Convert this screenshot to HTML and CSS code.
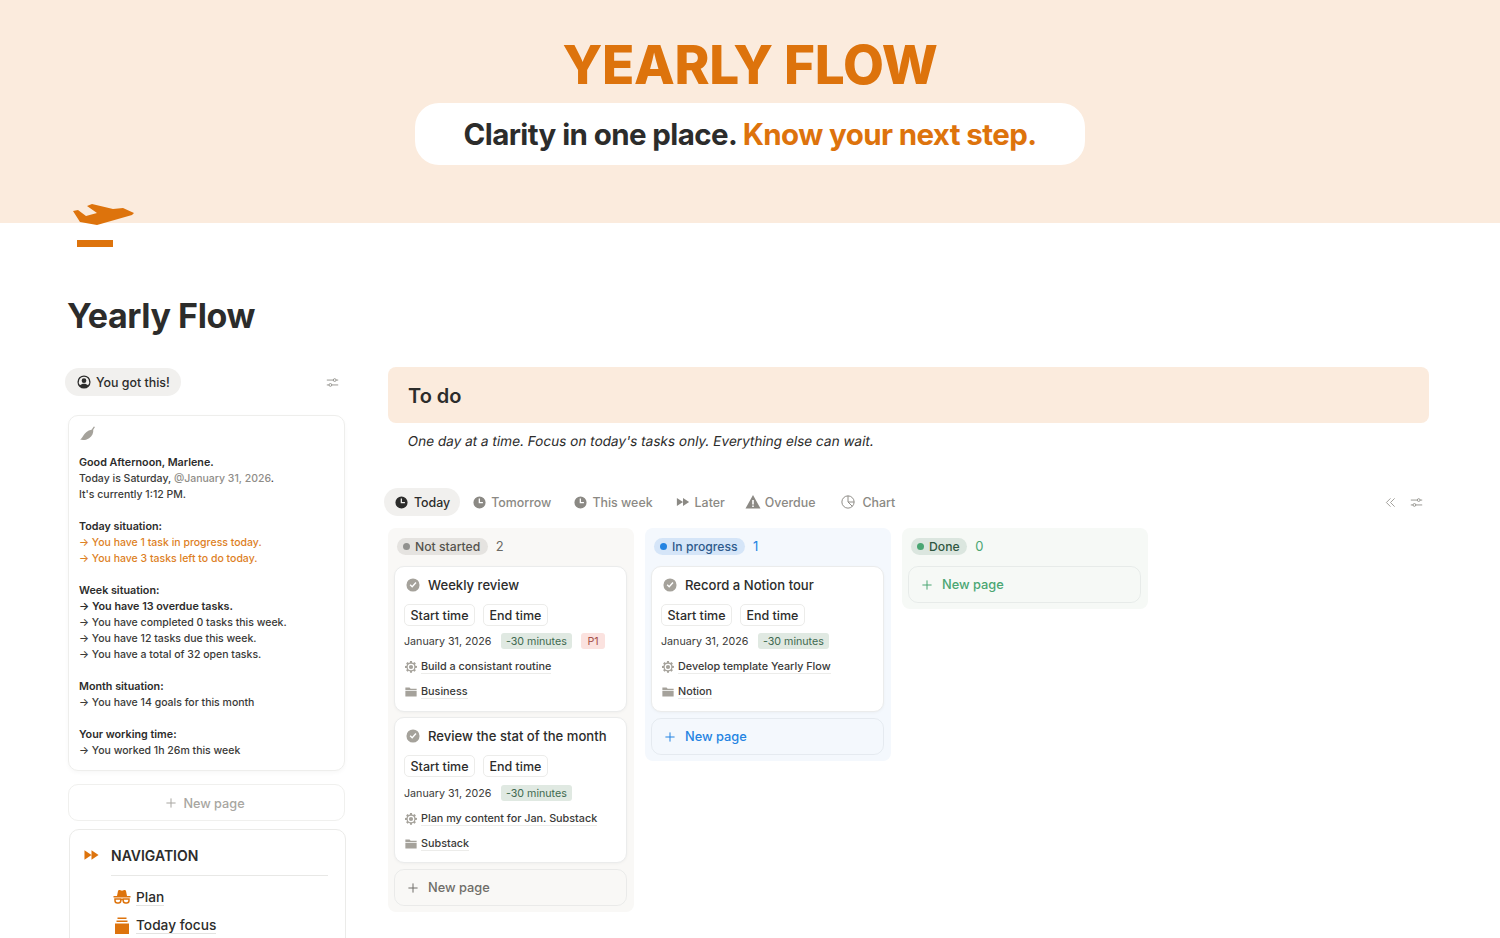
FILE: index.html
```html
<!DOCTYPE html>
<html lang="en-US">
   <head>
      <meta charset="UTF-8"/>
      <title>Yearly Flow</title>
      <link rel="stylesheet" href="styles.css">
   </head>
   <body>
      <svg class="defs" width="0" height="0">
         <defs>
            <symbol id="clock" viewBox="0 0 16 16"><path fill-rule="evenodd" d="M8 .5a7.500 7.500 0 1 1 0 15 7.500 7.500 0 0 1 0-15zM7 3.200v5.800h5.200V7.400H8.600V3.200z"/></symbol>
            <symbol id="check" viewBox="0 0 16 16"><path fill-rule="evenodd" d="M8 .5a7.500 7.500 0 1 1 0 15 7.500 7.500 0 0 1 0-15zM4.200 8.200l2.900 2.900 4.900-5.400-1.200-1.100-3.800 4.200-1.700-1.700z"/></symbol>
            <symbol id="gear" viewBox="0 0 16 16"><path fill-rule="evenodd" d="M6.700 0h2.600l.3 2 1.300.5L12.600 1.300l1.900 1.900-1.200 1.700.6 1.300 2.100.3v2.600l-2.100.3-.6 1.300 1.200 1.700-1.900 1.900-1.700-1.200-1.300.6-.3 2.100H6.700l-.3-2.100-1.300-.6-1.700 1.200-1.900-1.900 1.200-1.700-.6-1.300L0 9.300V6.700l2.100-.3.6-1.300L1.500 3.200l1.900-1.900 1.700 1.200 1.300-.5zM8 3.600a4.400 4.400 0 1 0 0 8.800 4.400 4.400 0 0 0 0-8.800zm0 1.600a2.800 2.800 0 1 1 0 5.600 2.800 2.800 0 0 1 0-5.600z"/></symbol>
            <symbol id="folder" viewBox="0 0 16 16"><path d="M.5 2h5.600l1.400 1.800h8V5.200H.5zM.5 6.200h15V14H.5z"/></symbol>
            <symbol id="sliders" viewBox="0 0 16 16"><path fill="none" stroke="currentColor" stroke-width="1.100" d="M1 5h8M12.400 5H15M1 11h2.800M7 11h8"/><circle cx="10.700" cy="5" r="1.700" fill="none" stroke="currentColor" stroke-width="1.100"/><circle cx="5.400" cy="11" r="1.700" fill="none" stroke="currentColor" stroke-width="1.100"/></symbol>
            <symbol id="plus" viewBox="0 0 12 12"><path fill="none" stroke="currentColor" stroke-width="1.200" d="M6 .5v11M.5 6h11"/></symbol>
         </defs>
      </svg>

      <header class="cover">
         <div class="coverTitle">YEARLY FLOW</div>
         <div class="coverPill">Clarity in one place. <span class="orange">Know your next step.</span></div>
      </header>

      <div class="page">
         <svg class="pageIcon" width="64" height="46" viewBox="72 203 64 46">
            <path fill="#dd730c" d="M73 211l5-1 8 6 11-3-10-7 5-2 21 5 10-1 11 5-2 2-35 10-17-3z"/>
            <rect x="77" y="240" width="36" height="7" fill="#dd730c"/>
         </svg>

         <h1>Yearly Flow</h1>

         <div class="columns">
            <aside class="sidebar">
               <div class="viewRow">
                  <span class="viewPill">
                     <svg class="icon14" viewBox="0 0 16 16"><path fill-rule="evenodd" d="M8 .5a7.500 7.500 0 1 1 0 15 7.500 7.500 0 0 1 0-15zm0 1.500a6 6 0 0 0-4.600 9.800C4.400 10.600 6.100 10 8 10s3.600.6 4.600 1.800A6 6 0 0 0 8 2zM8 3.800a2.700 2.700 0 1 1 0 5.400 2.700 2.700 0 0 1 0-5.400z"/></svg>
                     You got this!
                  </span>
                  <svg class="sliders"><use href="#sliders"/></svg>
               </div>

               <div class="infoCard">
                  <svg class="pepper" viewBox="0 0 16 16"><path fill="#a5a29b" d="M15 1l-1.600 2.600c.4 3-1 6-3.900 7.900-2.800 1.800-6 2.200-8.500 1.300 1.200-.6 2-2 3-3.600C5.600 6.500 8 4 11.800 3.500L14 .5z"/></svg>
                  <p><b>Good Afternoon, Marlene.</b><br>Today is Saturday, <span class="mention">@January 31, 2026</span>.<br>It's currently 1:12 PM.</p>
                  <p><b>Today situation:</b><br><span class="orangeText">→ You have 1 task in progress today.<br>→ You have 3 tasks left to do today.</span></p>
                  <p><b>Week situation:</b><br><b>→ You have 13 overdue tasks.</b><br>→ You have completed 0 tasks this week.<br>→ You have 12 tasks due this week.<br>→ You have a total of 32 open tasks.</p>
                  <p><b>Month situation:</b><br>→ You have 14 goals for this month</p>
                  <p><b>Your working time:</b><br>→ You worked 1h 26m this week</p>
               </div>

               <div class="sideNew"><svg class="plus10"><use href="#plus"/></svg>New page</div>

               <nav class="navCard">
                  <div class="navHead">
                     <svg class="navArrows" viewBox="0 0 16 12"><path fill="#dd730c" d="M.5 1l7.500 5-7.500 5zM8 1l7.500 5L8 11z"/></svg>
                     <span>NAVIGATION</span>
                  </div>
                  <div class="navList">
                     <a class="navItem">
                        <svg class="navIcon" viewBox="0 0 18 18"><path fill="#dd730c" d="M4 8l1-5c.2-.9.9-1.300 1.700-1L9 2.800 11.300 2c.8-.3 1.500.1 1.700 1l1 5h3.500v1.400H.5V8z"/><path fill="none" stroke="#dd730c" stroke-width="1.500" d="M2 11h5.800v1.500c0 1.300-1 2.500-2.400 2.500H4.400C3 15 2 13.800 2 12.500zM10.200 11H16v1.500c0 1.300-1 2.500-2.400 2.500h-1C11.200 15 10.200 13.800 10.200 12.500zM7.800 11.500h2.400"/></svg>
                        <span>Plan</span>
                     </a>
                     <a class="navItem">
                        <svg class="navIcon" viewBox="0 0 18 18"><path fill="#dd730c" d="M4.500 .5h9V2h-9zM3.500 3.500h11V5h-11zM2 6.500h14V17H2z"/></svg>
                        <span>Today focus</span>
                     </a>
                  </div>
               </nav>
            </aside>

            <main class="content">
               <div class="callout">To do</div>
               <p class="quote">One day at a time. Focus on today's tasks only. Everything else can wait.</p>

               <div class="tabs">
                  <span class="tab tabActive"><svg class="icon13"><use href="#clock"/></svg>Today</span>
                  <span class="tab"><svg class="icon13"><use href="#clock"/></svg>Tomorrow</span>
                  <span class="tab"><svg class="icon13"><use href="#clock"/></svg>This week</span>
                  <span class="tab"><svg class="icon14" viewBox="0 0 16 12"><path d="M1 1.500l7 4.500-7 4.500zM8 1.500l7 4.500-7 4.500z"/></svg>Later</span>
                  <span class="tab tabTight"><svg class="icon16" viewBox="0 0 16 16"><path fill-rule="evenodd" d="M8 1l7.500 13.500H.5zM7.200 6v4.500h1.600V6zm0 5.500V13h1.600v-1.500z"/></svg>Overdue</span>
                  <span class="tab tabWide"><svg class="icon14" viewBox="0 0 16 16"><g fill="none" stroke="currentColor" stroke-width="1.100"><circle cx="8" cy="8" r="7"/><path d="M8 1V8l5 5M8 8h7"/></g></svg>Chart</span>
                  <span class="tabTools">
                     <svg class="chevrons" viewBox="0 0 12 12"><path fill="none" stroke="currentColor" d="M6 1.500L1.500 6 6 10.500M10.500 1.500L6 6l4.500 4.500"/></svg>
                     <svg class="sliders"><use href="#sliders"/></svg>
                  </span>
               </div>

               <div class="board">
                  <section class="lane laneGrey">
                     <div class="laneHead"><span class="status"><i class="dot"></i>Not started</span><span class="count">2</span></div>

                     <article class="taskCard">
                        <div class="taskTitle"><svg class="icon14"><use href="#check"/></svg>Weekly review</div>
                        <div class="times"><span>Start time</span><span>End time</span></div>
                        <div class="meta">January 31, 2026 <span class="tag tagGreen">-30 minutes</span> <span class="tag tagRed">P1</span></div>
                        <div class="rel"><svg class="icon12"><use href="#gear"/></svg><span>Build a consistant routine</span></div>
                        <div class="rel"><svg class="icon12"><use href="#folder"/></svg><span>Business</span></div>
                     </article>

                     <article class="taskCard">
                        <div class="taskTitle"><svg class="icon14"><use href="#check"/></svg>Review the stat of the month</div>
                        <div class="times"><span>Start time</span><span>End time</span></div>
                        <div class="meta">January 31, 2026 <span class="tag tagGreen">-30 minutes</span></div>
                        <div class="rel"><svg class="icon12"><use href="#gear"/></svg><span>Plan my content for Jan. Substack</span></div>
                        <div class="rel"><svg class="icon12"><use href="#folder"/></svg><span>Substack</span></div>
                     </article>

                     <div class="newPage"><svg class="plus12"><use href="#plus"/></svg>New page</div>
                  </section>

                  <section class="lane laneBlue">
                     <div class="laneHead"><span class="status"><i class="dot"></i>In progress</span><span class="count">1</span></div>

                     <article class="taskCard">
                        <div class="taskTitle"><svg class="icon14"><use href="#check"/></svg>Record a Notion tour</div>
                        <div class="times"><span>Start time</span><span>End time</span></div>
                        <div class="meta">January 31, 2026 <span class="tag tagGreen">-30 minutes</span></div>
                        <div class="rel"><svg class="icon12"><use href="#gear"/></svg><span>Develop template Yearly Flow</span></div>
                        <div class="rel"><svg class="icon12"><use href="#folder"/></svg><span>Notion</span></div>
                     </article>

                     <div class="newPage"><svg class="plus12"><use href="#plus"/></svg>New page</div>
                  </section>

                  <section class="lane laneGreen">
                     <div class="laneHead"><span class="status"><i class="dot"></i>Done</span><span class="count">0</span></div>
                     <div class="newPage"><svg class="plus12"><use href="#plus"/></svg>New page</div>
                  </section>
               </div>
            </main>
         </div>
      </div>
   </body>
</html>
```

FILE: styles.css
```css
html, body {
   margin: 0;
   padding: 0;
   height: 100vh;
   overflow: hidden;
}

body {
   background: #ffffff;
   color: #2c2c2b;
   font-family: Inter, "Liberation Sans", sans-serif;
}

svg {
   fill: currentColor;
   flex: none;
}

.defs {
   position: absolute;
}

.orange {
   color: #dd730c;
}

/* cover */
.cover {
   height: 223px;
   background: #fbebdd;
   display: flex;
   flex-direction: column;
   align-items: center;
   box-sizing: border-box;
   padding-top: 34px;
}

.coverTitle {
   color: #dd730c;
   font-size: 53px;
   font-weight: 800;
   line-height: 62px;
   letter-spacing: -0.3px;
}

.coverPill {
   margin-top: 7px;
   width: 670px;
   height: 62px;
   background: #ffffff;
   border-radius: 24px;
   font-size: 29.500px;
   font-weight: 700;
   letter-spacing: -0.6px;
   display: flex;
   align-items: center;
   justify-content: center;
   white-space: pre;
}

/* page */
.page {
   padding: 0 71px 0 68px;
}

.pageIcon {
   display: block;
   margin: -20px 0 0 4px;
}

h1 {
   margin: 46px 0 0 -1px;
   font-size: 34px;
   line-height: 42px;
   font-weight: 700;
   letter-spacing: -0.4px;
}

.columns {
   display: flex;
   gap: 43px;
   margin-top: 30px;
}

/* sidebar */
.sidebar {
   width: 277px;
   flex: none;
}

.viewRow {
   display: flex;
   justify-content: space-between;
   align-items: center;
   height: 30px;
   margin-left: -3px;
   padding-right: 6px;
}

.viewPill {
   display: flex;
   align-items: center;
   gap: 5px;
   height: 28px;
   padding: 0 11px 0 12px;
   border-radius: 14px;
   background: #f1f0ee;
   font-size: 12.400px;
   font-weight: 500;
}

.icon13 {
   width: 13px;
   height: 13px;
}

.icon14 {
   width: 14px;
   height: 14px;
}

.icon16 {
   width: 16px;
   height: 16px;
}

.icon12 {
   width: 12px;
   height: 12px;
}

.sliders {
   width: 13px;
   height: 13px;
   color: #8f8d88;
}

.infoCard {
   margin-top: 18px;
   box-sizing: border-box;
   height: 356px;
   border: 1px solid #eeeeec;
   border-radius: 10px;
   padding: 10px;
   box-shadow: 0 2px 4px rgba(0, 0, 0, 0.03);
   font-size: 10.500px;
   line-height: 16px;
   font-weight: 450;
   color: #3a3a38;
}

.infoCard p {
   margin: 0 0 16px 0;
}

.infoCard b {
   font-size: 10.750px;
   font-weight: 600;
   color: #2c2c2b;
}

.pepper {
   display: block;
   width: 17px;
   height: 17px;
   margin: 0 0 12px 0;
}

.mention {
   color: #8f8d88;
}

.orangeText {
   color: #dd7f25;
}

.sideNew {
   margin-top: 13px;
   height: 37px;
   box-sizing: border-box;
   border: 1px solid #f0f0ee;
   border-radius: 10px;
   display: flex;
   align-items: center;
   justify-content: center;
   gap: 7px;
   padding: 1px 2px 0 0;
   color: #a8a6a1;
   font-size: 12.700px;
   font-weight: 500;
}

.plus10 {
   width: 10px;
   height: 10px;
}

.navCard {
   margin: 8px -1px 0 1px;
   box-sizing: border-box;
   height: 240px;
   border: 1px solid #ebebe9;
   border-radius: 10px;
   padding: 15px 17px 0 14px;
}

.navHead {
   display: flex;
   align-items: center;
   gap: 12px;
   height: 22px;
   margin-top: -1px;
   font-size: 14px;
   font-weight: 600;
}

.navArrows {
   width: 15px;
   height: 12px;
}

.navList {
   margin: 9px 0 0 27px;
   border-top: 1px solid #e8e8e6;
   padding-top: 7px;
}

.navItem {
   display: flex;
   align-items: center;
   gap: 5px;
   height: 28.500px;
   padding-left: 2px;
   font-size: 13.700px;
   font-weight: 500;
}

.navIcon {
   width: 18px;
   height: 18px;
}

.navItem span {
   border-bottom: 1px solid #e3e3e1;
}

/* main column */
.content {
   flex: 1;
   min-width: 0;
}

.callout {
   height: 56px;
   box-sizing: border-box;
   background: #fbebdd;
   border-radius: 8px;
   padding: 1px 0 0 20px;
   display: flex;
   align-items: center;
   font-size: 20px;
   font-weight: 600;
}

.quote {
   margin: 7px 0 0 18px;
   font-size: 13.600px;
   line-height: 22px;
   transform: skewX(-10deg);
   transform-origin: left bottom;
}

.tabs {
   margin: 36px 0 0 -4px;
   display: flex;
   align-items: center;
   gap: 3px;
   height: 28px;
   font-size: 12.400px;
   font-weight: 500;
   color: #8b8984;
}

.tab {
   display: flex;
   align-items: center;
   gap: 5px;
   height: 28px;
   padding: 0 10px;
   border-radius: 14px;
}

.tabActive {
   gap: 6px;
   padding-left: 11px;
   background: #f1f0ee;
   color: #2c2c2b;
}

.tabTight {
   gap: 4px;
   margin-left: -3px;
}

.tabWide {
   gap: 7px;
   margin-left: 3px;
}

.tabTools {
   margin-left: auto;
   display: flex;
   align-items: center;
   gap: 14px;
   padding-right: 6px;
   color: #9a9893;
}

.chevrons {
   width: 11px;
   height: 11px;
}

/* board */
.board {
   margin-top: 12px;
   display: flex;
   align-items: flex-start;
   gap: 11px;
}

.lane {
   width: 246px;
   box-sizing: border-box;
   padding: 6px 7px 6px 6px;
   border-radius: 8px;
   display: flex;
   flex-direction: column;
   gap: 5px;
}

.laneGrey {
   background: #f9f8f6;
}

.laneBlue {
   background: #f4f8fd;
}

.laneGreen {
   background: #f6f9f6;
}

.laneHead {
   display: flex;
   align-items: center;
   gap: 8px;
   height: 24px;
   padding-left: 3px;
   margin-bottom: 3px;
   font-size: 12.200px;
}

.status {
   display: flex;
   align-items: center;
   gap: 5px;
   height: 17px;
   padding: 0 7.500px 0 6px;
   border-radius: 9px;
   font-weight: 450;
}

.count {
   font-size: 13px;
}

.dot {
   width: 7px;
   height: 7px;
   border-radius: 50%;
}

.laneGrey .status {
   background: #e5e3e0;
   color: #55534e;
}

.laneGrey .dot {
   background: #91918e;
}

.laneGrey .count {
   color: #6b6964;
}

.laneBlue .status {
   background: #d5e5f8;
   color: #2e5a8c;
}

.laneBlue .dot {
   background: #2383e2;
}

.laneBlue .count {
   color: #2383e2;
}

.laneGreen .status {
   background: #dbe6df;
   color: #2f5641;
}

.laneGreen .dot {
   background: #4aa673;
}

.laneGreen .count {
   color: #4aa673;
}

.taskCard {
   height: 146px;
   box-sizing: border-box;
   background: #ffffff;
   border-radius: 10px;
   border: 1px solid #ebecec;
   box-shadow: 0 1px 3px rgba(0, 0, 0, 0.04);
   padding: 8px 9px 0 9px;
}

.taskTitle {
   display: flex;
   align-items: center;
   gap: 8px;
   height: 19px;
   padding-left: 2px;
   font-size: 13.100px;
   font-weight: 500;
}

.taskTitle svg {
   color: #a5a29b;
}

.times {
   display: flex;
   gap: 8px;
   margin-top: 10px;
   font-size: 12.500px;
   font-weight: 450;
}

.times span {
   height: 22px;
   box-sizing: border-box;
   padding: 0 5.500px;
   display: flex;
   align-items: center;
   border: 1px solid #ececea;
   border-radius: 5px;
}

.meta {
   margin-top: 7px;
   display: flex;
   align-items: center;
   gap: 9.500px;
   height: 16px;
   font-size: 10.700px;
   color: #3a3a38;
}

.taskCard + .taskCard .meta {
   margin-top: 8px;
}

.tag {
   height: 16px;
   display: flex;
   align-items: center;
   padding: 0 5px;
   border-radius: 3px;
}

.tagGreen {
   background: #e0e9e2;
   color: #3f6a50;
}

.tagRed {
   padding: 0 6px;
   background: #fbe2df;
   color: #a4514a;
}

.rel {
   margin-top: 9px;
   display: flex;
   align-items: center;
   gap: 4px;
   height: 16px;
   padding-left: 1px;
   font-size: 10.800px;
   font-weight: 500;
   color: #3a3a38;
}

.meta + .rel {
   margin-top: 10px;
}

.rel svg {
   color: #a5a29b;
}

.rel span {
   border-bottom: 1px solid #ececea;
}

.newPage {
   height: 37px;
   box-sizing: border-box;
   border-radius: 10px;
   border: 1px solid rgba(40, 50, 70, 0.07);
   display: flex;
   align-items: center;
   gap: 10px;
   padding-left: 13px;
   font-size: 12.800px;
   font-weight: 450;
}

.taskCard + .newPage {
   margin-top: 1px;
}

.plus12 {
   width: 10px;
   height: 10px;
}

.laneGrey .newPage {
   color: #6f6d68;
}

.laneBlue .newPage {
   color: #2383e2;
}

.laneGreen .newPage {
   color: #4aa673;
}
```
